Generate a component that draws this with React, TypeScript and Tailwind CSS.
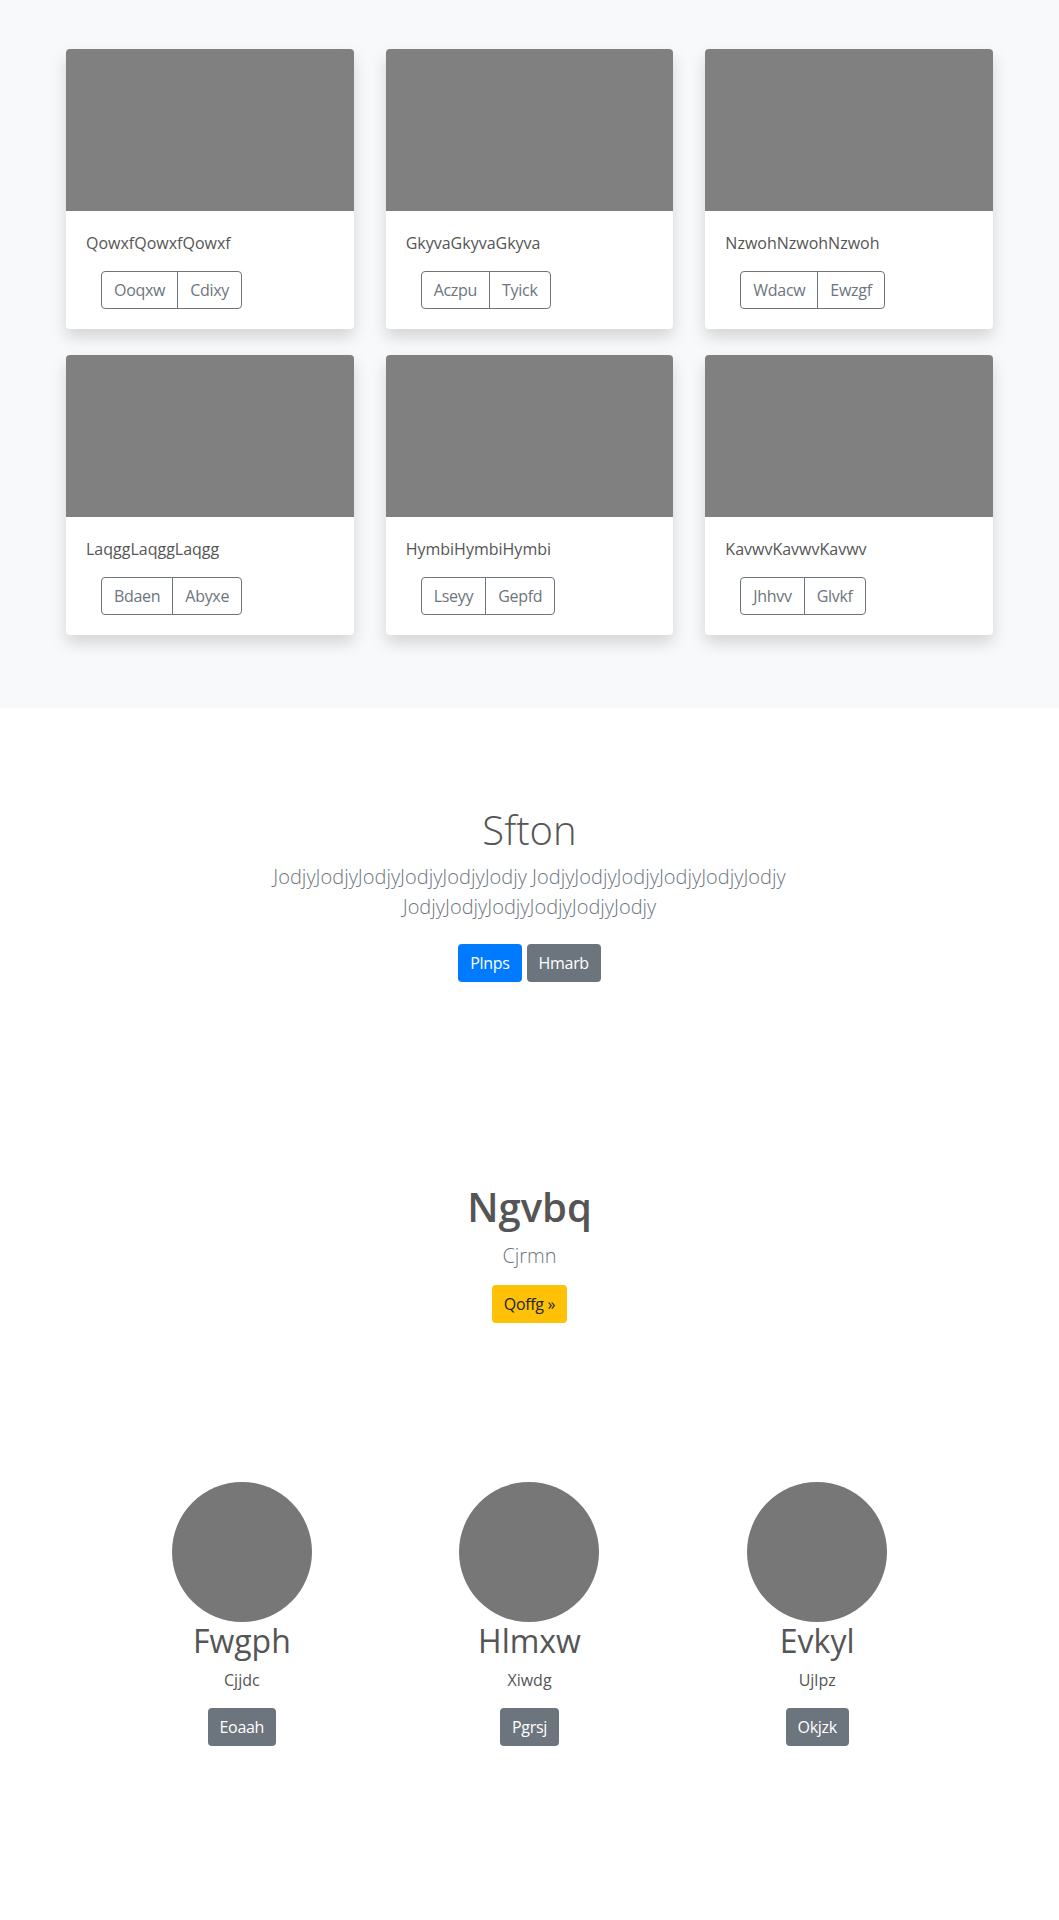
import React from "react";

const cards = [
  { title: "QowxfQowxfQowxf", a: "Ooqxw", b: "Cdixy" },
  { title: "GkyvaGkyvaGkyva", a: "Aczpu", b: "Tyick" },
  { title: "NzwohNzwohNzwoh", a: "Wdacw", b: "Ewzgf" },
  { title: "LaqggLaqggLaqgg", a: "Bdaen", b: "Abyxe" },
  { title: "HymbiHymbiHymbi", a: "Lseyy", b: "Gepfd" },
  { title: "KavwvKavwvKavwv", a: "Jhhvv", b: "Glvkf" },
];

const people = [
  { name: "Fwgph", role: "Cjjdc", btn: "Eoaah" },
  { name: "Hlmxw", role: "Xiwdg", btn: "Pgrsj" },
  { name: "Evkyl", role: "Ujlpz", btn: "Okjzk" },
];

const Card: React.FC<{ title: string; a: string; b: string }> = ({ title, a, b }) => (
  <div className="bg-white rounded overflow-hidden shadow-[0_8px_16px_rgba(0,0,0,0.15)]">
    <div className="h-[162px] bg-[#808080]" />
    <div className="p-5">
      <p className="text-[16px] leading-6 text-[#555] mb-4">{title}</p>
      {/* button group */}
      <div className="ml-[15px] inline-flex">
        <button className="h-[38px] px-3 text-[16px] tracking-[-0.3px] text-[#6c757d] border border-[#6c757d] rounded-l">{a}</button>
        <button className="h-[38px] px-3 -ml-px text-[16px] tracking-[-0.3px] text-[#6c757d] border border-[#6c757d] rounded-r">{b}</button>
      </div>
    </div>
  </div>
);

export default function App() {
  return (
    <div className="font-['Open_Sans',sans-serif] bg-white min-h-[1920px]">
      {/* Cards */}
      <section className="bg-[#f8f9fa] pt-[49px] pb-[73px]">
        <div className="w-[927px] mx-auto grid grid-cols-3 gap-x-8 gap-y-[26px]">
          {cards.map((c, i) => (
            <Card key={i} {...c} />
          ))}
        </div>
      </section>

      {/* Intro */}
      <section className="pt-[98px] flex flex-col items-center text-center">
        <h1 className="text-[40px] leading-[48px] font-light text-[#555] mb-2">Sfton</h1>
        <p className="max-w-[610px] text-[20px] leading-[30px] font-light text-[#6c757d] mb-[22px]">
          JodjyJodjyJodjyJodjyJodjyJodjy JodjyJodjyJodjyJodjyJodjyJodjy JodjyJodjyJodjyJodjyJodjyJodjy
        </p>
        <div className="flex gap-[5px]">
          <button className="h-[38px] px-3 rounded text-[16px] tracking-[-0.3px] text-white bg-[#007bff]">Plnps</button>
          <button className="h-[38px] px-3 rounded text-[16px] tracking-[-0.3px] text-white bg-[#6c757d]">Hmarb</button>
        </div>
      </section>

      {/* Call to action */}
      <section className="pt-[201px] flex flex-col items-center text-center">
        <h2 className="text-[40px] leading-[48px] font-semibold text-[#555] mb-[10px]">Ngvbq</h2>
        <p className="text-[20px] leading-[30px] font-light text-[#6c757d] mb-[14px]">Cjrmn</p>
        <button className="h-[38px] px-3 rounded text-[16px] tracking-[-0.3px] text-[#212529] bg-[#ffc107]">Qoffg »</button>
      </section>

      {/* Team */}
      <section className="pt-[159px]">
        <div className="w-[863px] mx-auto grid grid-cols-3">
          {people.map((p, i) => (
            <div key={i} className="flex flex-col items-center text-center">
              <div className="w-[140px] h-[140px] rounded-full bg-[#777]" />
              <h3 className="text-[32px] leading-[38px] font-normal text-[#555] mb-2">{p.name}</h3>
              <p className="text-[16px] leading-6 text-[#555] mb-4">{p.role}</p>
              <button className="h-[38px] px-3 rounded text-[16px] tracking-[-0.3px] text-white bg-[#6c757d]">{p.btn}</button>
            </div>
          ))}
        </div>
      </section>
    </div>
  );
}
